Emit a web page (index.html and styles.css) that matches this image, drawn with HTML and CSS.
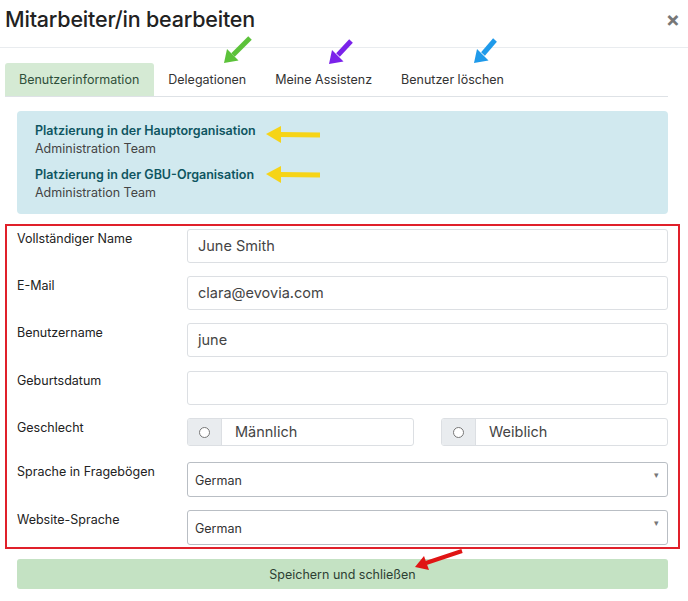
FILE: index.html
```
<!DOCTYPE html>
<html lang="de">
<head>
    <meta charset="UTF-8">
    <meta name="viewport" content="width=device-width, initial-scale=1.0">
    <title>Mitarbeiter/in bearbeiten</title>
    <link rel="stylesheet" href="styles.css">
</head>
<body>
    <div class="modal">
        <div class="modal-header">
            <h2 class="modal-title">Mitarbeiter/in bearbeiten</h2>
            <span class="close-btn">&times;</span>
        </div>

        <ul class="tabs">
            <li class="tab active">Benutzerinformation</li>
            <li class="tab">Delegationen</li>
            <li class="tab">Meine Assistenz</li>
            <li class="tab">Benutzer löschen</li>
        </ul>

        <div class="info-box">
            <div class="info-title">Platzierung in der Hauptorganisation</div>
            <div class="info-text">Administration Team</div>
            <div class="info-title">Platzierung in der GBU-Organisation</div>
            <div class="info-text">Administration Team</div>
        </div>

        <div class="user-form">
            <div class="form-row">
                <label class="form-label">Vollständiger Name</label>
                <div class="form-input">June Smith</div>
            </div>
            <div class="form-row">
                <label class="form-label">E-Mail</label>
                <div class="form-input">clara@evovia.com</div>
            </div>
            <div class="form-row">
                <label class="form-label">Benutzername</label>
                <div class="form-input">june</div>
            </div>
            <div class="form-row row-date">
                <label class="form-label">Geburtsdatum</label>
                <div class="form-input"></div>
            </div>
            <div class="form-row">
                <label class="form-label">Geschlecht</label>
                <div class="radio-pair">
                    <div class="radio-group">
                        <span class="radio-addon"><span class="radio-dot"></span></span>
                        <span class="radio-label">Männlich</span>
                    </div>
                    <div class="radio-group">
                        <span class="radio-addon"><span class="radio-dot"></span></span>
                        <span class="radio-label">Weiblich</span>
                    </div>
                </div>
            </div>
            <div class="form-row">
                <label class="form-label">Sprache in Fragebögen</label>
                <div class="form-select">German<span class="caret">&#9662;</span></div>
            </div>
            <div class="form-row">
                <label class="form-label">Website-Sprache</label>
                <div class="form-select">German<span class="caret">&#9662;</span></div>
            </div>
        </div>

        <button class="save-btn">Speichern und schließen</button>
    </div>

    <!-- Markierungspfeile -->
    <svg class="arrows" width="688" height="601" viewBox="0 0 688 601">
        <g stroke-linecap="butt">
            <line x1="250" y1="38" x2="233" y2="55" stroke="#5cc23a" stroke-width="5"/>
            <polygon points="224,63 238.5,60.5 227,49" fill="#5cc23a"/>

            <line x1="351" y1="41" x2="338" y2="55" stroke="#7b22ea" stroke-width="5"/>
            <polygon points="329,64 343.5,61.5 332,50" fill="#7b22ea"/>

            <line x1="495" y1="40" x2="483" y2="54" stroke="#1f9aea" stroke-width="5"/>
            <polygon points="474,63 488.5,60.5 477,49" fill="#1f9aea"/>

            <line x1="320" y1="135" x2="279" y2="134.5" stroke="#f6d417" stroke-width="5"/>
            <polygon points="266,134 281,126 281,143" fill="#f6d417"/>

            <line x1="320" y1="175" x2="279" y2="174.5" stroke="#f6d417" stroke-width="5"/>
            <polygon points="266,174 281,166 281,183" fill="#f6d417"/>

            <line x1="462" y1="551" x2="426" y2="563" stroke="#e01414" stroke-width="4"/>
            <polygon points="415,567 429,570 424,556" fill="#e01414"/>
        </g>
    </svg>
</body>
</html>
```
FILE: styles.css
```
body {
    margin: 0;
    font-family: Inter, 'Noto Sans', Arial, sans-serif;
    color: #212529;
    background-color: white;
    width: 688px;
    height: 601px;
    overflow: hidden;
    position: relative;
}
.modal-header {
    height: 47px;
    border-bottom: 1px solid #e9ecef;
    display: flex;
    align-items: center;
    justify-content: space-between;
    padding: 0 8px 0 5px;
}
.modal-title {
    margin: 0 0 10px;
    font-size: 21.5px;
    font-weight: 500;
    color: #222;
    letter-spacing: -0.2px;
}
.close-btn {
    font-size: 21px;
    font-weight: bold;
    color: #777;
    margin-bottom: 8px;
}
.tabs {
    list-style: none;
    margin: 15px 20px 0 5px;
    padding: 0;
    display: flex;
    border-bottom: 1px solid #dee2e6;
}
.tab {
    padding: 0 15px 0 14px;
    height: 33px;
    line-height: 33px;
    font-size: 12.5px;
    color: #333;
    border-radius: 3px 3px 0 0;
}
.tab.active {
    background-color: #d5ead4;
    color: #2f4f3a;
}
.info-box {
    margin: 14px 20px 0 17px;
    padding: 11px 18px 10px;
    height: 82px;
    background-color: #d1e9ef;
    border-radius: 4px;
    font-size: 12.5px;
}
.info-title {
    font-weight: 600;
    color: #0e5561;
    line-height: 18px;
}
.info-text {
    color: #444;
    line-height: 18px;
    margin-bottom: 8px;
}
.user-form {
    margin: 10px 8px 0 5px;
    border: 2px solid #e0202a;
    padding: 3px 10px 2px 10px;
    display: flex;
    flex-direction: column;
    gap: 13px;
}
.form-row {
    display: grid;
    grid-template-columns: 170px 1fr;
}
.row-date {
    margin-top: 1px;
}
.form-label {
    font-size: 12.5px;
    color: #222;
    padding-top: 2px;
}
.form-input {
    height: 32px;
    border: 1px solid #dcdfe3;
    border-radius: 3px;
    padding: 0 10px;
    line-height: 32px;
    font-size: 14.5px;
    color: #444;
}
.radio-pair {
    display: grid;
    grid-template-columns: 1fr 1fr;
    gap: 27px;
    height: 31px;
    align-items: start;
}
.radio-group {
    display: flex;
    height: 26px;
    border: 1px solid #dcdfe3;
    border-radius: 3px;
    overflow: hidden;
}
.radio-addon {
    width: 33px;
    background-color: #e9ecef;
    border-right: 1px solid #dcdfe3;
    display: flex;
    align-items: center;
    justify-content: center;
}
.radio-dot {
    width: 9px;
    height: 9px;
    border: 1px solid #777;
    border-radius: 50%;
    background-color: white;
}
.radio-label {
    line-height: 26px;
    padding-left: 13px;
    font-size: 14.5px;
    color: #444;
}
.form-select {
    height: 33px;
    border: 1px solid #b9bec4;
    border-radius: 3px;
    padding: 0 7px;
    line-height: 35px;
    font-size: 12.5px;
    color: #333;
    position: relative;
}
.caret {
    position: absolute;
    right: 8px;
    top: -6px;
    font-size: 9px;
    color: #777;
}
.save-btn {
    display: block;
    margin: 10px 20px 0 17px;
    width: 651px;
    height: 30px;
    border: none;
    border-radius: 3px;
    background-color: #c4e2c3;
    color: #2d3f33;
    font-family: Inter, 'Noto Sans', Arial, sans-serif;
    font-size: 12.5px;
}
.arrows {
    position: absolute;
    left: 0;
    top: 0;
    pointer-events: none;
}
```
